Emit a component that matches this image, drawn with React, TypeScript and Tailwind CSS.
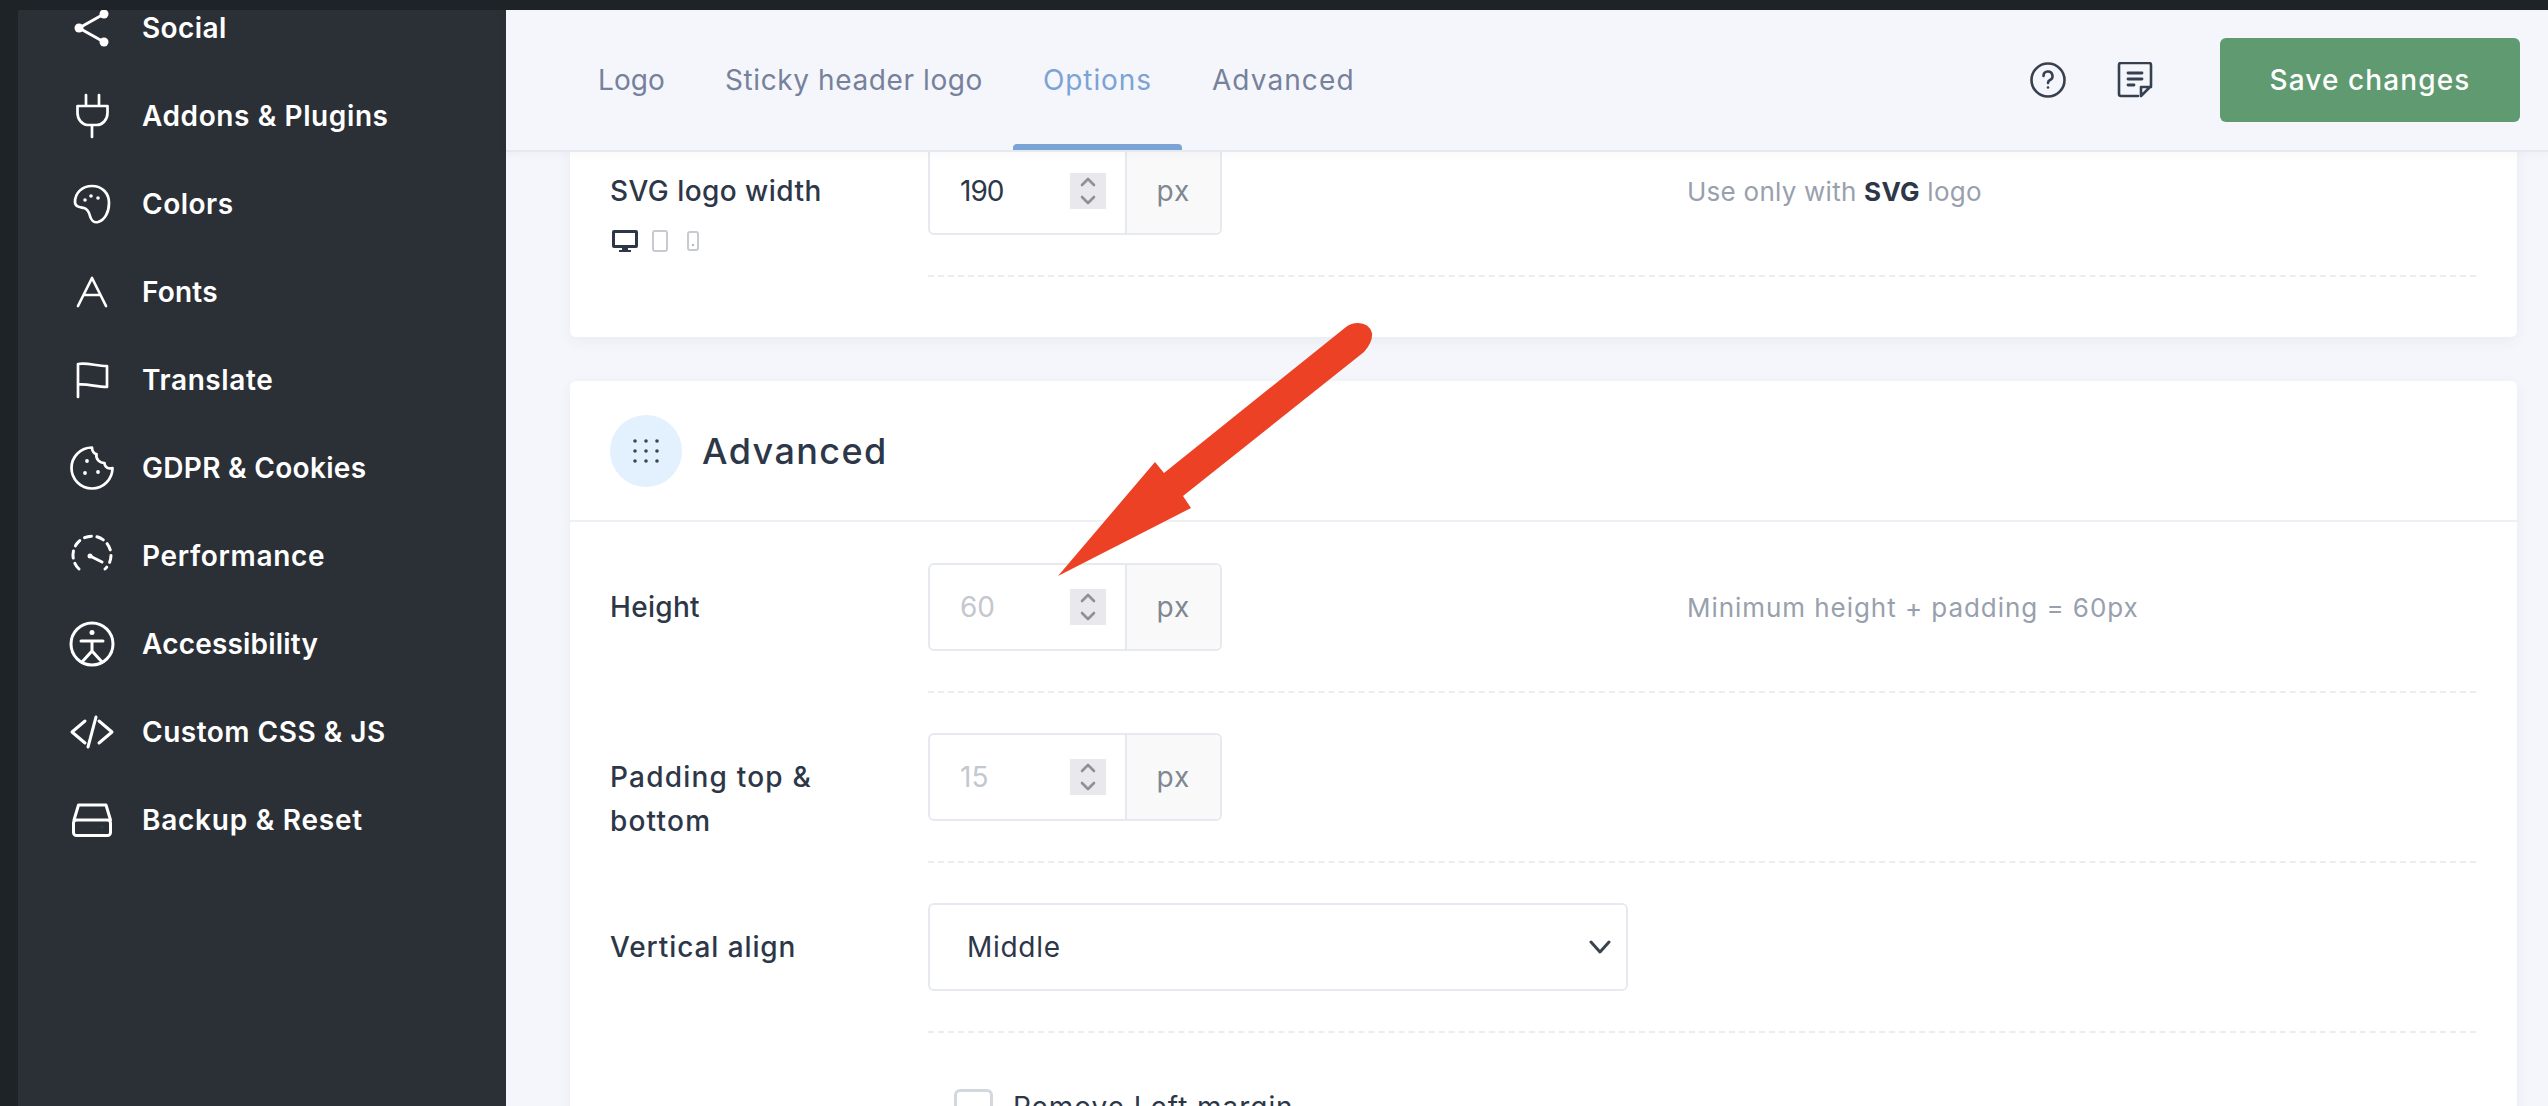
import { ReactNode } from "react";

const iconProps = {
  width: 48,
  height: 48,
  viewBox: "0 0 48 48",
  fill: "none",
  stroke: "#fff",
  strokeWidth: 2.7,
  strokeLinecap: "round" as const,
  strokeLinejoin: "round" as const,
};

const dot = (cx: number, cy: number, r = 2) => (
  <circle cx={cx} cy={cy} r={r} fill="#fff" stroke="none" />
);

const tabs = [
  { label: "Logo", spacing: "tracking-[0.1px] text-[#76819b]" },
  { label: "Sticky header logo", spacing: "tracking-[0.6px] text-[#76819b]" },
  { label: "Options", spacing: "tracking-[0.9px] text-[#7ba3d4]" },
  { label: "Advanced", spacing: "tracking-[1.1px] text-[#76819b]" },
];

const navItems: { label: string; icon: ReactNode; spacing: string }[] = [
  {
    label: "Social",
    spacing: "tracking-[0.4px]",
    icon: (
      <svg {...iconProps} strokeWidth={3}>
        <path d="M36 10 11 24l25 14" />
        {dot(36, 10, 4.5)}
        {dot(11, 24, 4.5)}
        {dot(36, 38, 4.5)}
      </svg>
    ),
  },
  {
    label: "Addons & Plugins",
    spacing: "tracking-[0.6px]",
    icon: (
      <svg {...iconProps}>
        <path d="M18 3v11M31 3v11M9.5 14h30v7a11 12 0 0 1-11 12h-9a11 12 0 0 1-10-12ZM24 33v12" />
      </svg>
    ),
  },
  {
    label: "Colors",
    spacing: "tracking-[0.5px]",
    icon: (
      <svg {...iconProps}>
        <path d="M24 6C14 6 7 13 7 22c0 5 5 5 9 6s5 4 6 8 4 7 8 6c7-2 11-10 11-19 0-10-7-17-17-17Z" />
        {dot(17, 20, 1.8)}
        {dot(23, 16, 1.8)}
        {dot(30, 18, 1.8)}
      </svg>
    ),
  },
  {
    label: "Fonts",
    spacing: "tracking-[0.2px]",
    icon: (
      <svg {...iconProps}>
        <path d="M10 38 24 10l14 28M15.5 27h17" />
      </svg>
    ),
  },
  {
    label: "Translate",
    spacing: "tracking-[0.6px]",
    icon: (
      <svg {...iconProps}>
        <path d="M10 41V8c10-1.5 18 2 29 2v21c-11 0-19-3.5-29-2.5" />
      </svg>
    ),
  },
  {
    label: "GDPR & Cookies",
    spacing: "tracking-[0.3px]",
    icon: (
      <svg {...iconProps}>
        <path d="M24 3.500A20.500 20.500 0 1 0 44.500 24c-4 1.500-8-1-8-5-5 0-9-4-8-9-2.500 0-4.500-3-4.500-6.500Z" />
        {dot(19, 17, 1.9)}
        {dot(17, 29, 1.9)}
        {dot(30, 28, 1.9)}
      </svg>
    ),
  },
  {
    label: "Performance",
    spacing: "tracking-[0.65px]",
    icon: (
      <svg {...iconProps} strokeWidth={3}>
        <path d="M11 37A19 19 0 1 1 37 37" strokeDasharray="7 5.500" />
        <path d="M22 24l12 6" />
        {dot(22, 24, 2.5)}
      </svg>
    ),
  },
  {
    label: "Accessibility",
    spacing: "tracking-[0.2px]",
    icon: (
      <svg {...iconProps} strokeWidth={3}>
        <circle cx="24" cy="24" r="21" />
        {dot(24, 12.500, 2.5)}
        <path d="M13 21h22M24 21v10M24 31l-10 11M24 31l10 11" />
      </svg>
    ),
  },
  {
    label: "Custom CSS & JS",
    spacing: "tracking-[0.5px]",
    icon: (
      <svg {...iconProps} strokeWidth={3}>
        <path d="M17 13 4 24l13 11M31 13l13 11-13 11M28 9l-8 30" />
      </svg>
    ),
  },
  {
    label: "Backup & Reset",
    spacing: "tracking-[0.75px]",
    icon: (
      <svg {...iconProps} strokeWidth={3}>
        <path d="M6 24 10.500 9H38l4.500 15" />
        <rect x="5.500" y="24" width="37" height="15.500" rx="3" />
        <circle cx="34" cy="31" r="1.800" fill="#2d3a4f" stroke="none" />
      </svg>
    ),
  },
];

function NumberField({ value, muted }: { value: string; muted?: boolean }) {
  return (
    <div className="flex h-[88px] w-[294px] rounded-md border-2 border-[#e6e9ef] bg-white">
      <div className="flex flex-1 items-center pl-[30px] pr-[19px]">
        <span
          className={
            muted
              ? "flex-1 text-[28px] text-[#c3c7ce]"
              : "flex-1 text-[28px] tracking-[-1px] text-[#2d3748]"
          }
        >
          {value}
        </span>
        <svg width="36" height="36" viewBox="0 0 36 36" fill="none" stroke="#8d8f99" strokeWidth="2.6" strokeLinecap="round" strokeLinejoin="round" className="bg-[#e8e8ed]">
          <path d="m12 12 6-6 6 6M12 24l6 6 6-6" />
        </svg>
      </div>
      <div className="flex w-[95px] items-center justify-center rounded-r-md border-l-2 border-[#e6e9ef] bg-[#f9f9fa] text-[28px] tracking-[1px] text-[#7f8792]">
        px
      </div>
    </div>
  );
}

function Hint({ children, spacing }: { children: ReactNode; spacing: string }) {
  return (
    <div className={`flex h-[88px] items-center text-[26px] text-[#98a0ad] ${spacing}`}>
      {children}
    </div>
  );
}

function Row({
  label,
  spacing,
  extra,
  children,
}: {
  label: ReactNode;
  spacing: string;
  extra?: ReactNode;
  children: ReactNode;
}) {
  return (
    <div className="flex">
      <div className={`w-[318px] pr-[40px] pt-[22px] text-[28px] font-medium leading-[44px] text-[#2d3748] ${spacing}`}>
        {label}
        {extra}
      </div>
      <div className="mb-[40px] flex-1 border-b-2 border-dashed border-[#eaedf2] pb-[40px]">
        <div className="grid grid-cols-[759px_1fr]">{children}</div>
      </div>
    </div>
  );
}

export default function App() {
  return (
    <div className="flex h-[1106px] w-[2548px] flex-col overflow-hidden bg-[#1e2328] font-['Inter',sans-serif]">
      <div className="relative z-20 h-[10px] shrink-0 bg-[#1e2328]" />
      <div className="flex min-h-0 flex-1">
        <div className="w-[18px] shrink-0 bg-[#1e2328]" />
        <aside className="w-[488px] shrink-0 bg-[#2b2f36]">
          <div className="-mt-[26px]">
            {navItems.map((item) => (
              <div key={item.label} className="flex h-[88px] items-center gap-[26px] pl-[50px]">
                {item.icon}
                <span className={`text-[28px] font-semibold text-white ${item.spacing}`}>
                  {item.label}
                </span>
              </div>
            ))}
          </div>
        </aside>

        <main className="flex min-w-0 flex-1 flex-col bg-[#f4f6fb]">
          <header className="relative z-10 flex h-[142px] shrink-0 items-stretch border-b-2 border-[#e5e9f2] bg-[#f4f6fb] pl-[62px] pr-[28px] shadow-[0_2px_8px_rgba(40,50,70,0.04)]">
            {tabs.map((tab) => (
              <div
                key={tab.label}
                className={`relative flex items-center px-[30px] text-[28px] ${tab.spacing}`}
              >
                {tab.label}
                {tab.label === "Options" && (
                  <div className="absolute inset-x-0 bottom-0 h-[6px] rounded-t bg-[#7ba3d4]" />
                )}
              </div>
            ))}
            <div className="ml-auto flex items-center">
              <svg width="36" height="36" viewBox="0 0 36 36" fill="none" stroke="#36404f" strokeWidth="2.6" strokeLinecap="round">
                <circle cx="18" cy="18" r="16.500" />
                <path d="M13.500 14a4.500 4.500 0 1 1 6.500 4c-1.300.7-2 1.400-2 3" />
                <circle cx="18" cy="25.500" r="1.300" fill="#36404f" stroke="none" />
              </svg>
              <svg width="36" height="36" viewBox="0 0 36 36" fill="none" stroke="#36404f" strokeWidth="2.6" strokeLinecap="round" strokeLinejoin="round" className="ml-[51px]">
                <path d="M21 34H4a2 2 0 0 1-2-2V3a2 2 0 0 1 2-2h28a2 2 0 0 1 2 2v21L24 34v-9h10" />
                <path d="M11 11h14M11 17h14M11 23h6" strokeWidth="2.8" />
              </svg>
              <button className="ml-[67px] h-[84px] w-[300px] rounded-md bg-[#5f9a70] text-[28px] font-medium tracking-[1.1px] text-white">
                Save changes
              </button>
            </div>
          </header>

          <div className="-mt-[9px] pl-[64px] pr-[31px]">
            <section className="rounded-md bg-white pb-[20px] pl-[40px] pr-[41px] pt-[4px] shadow-[0_4px_14px_rgba(50,60,90,0.06)]">
              <Row
                label="SVG logo width"
                spacing="tracking-[0.45px]"
                extra={
                  <div className="mt-[16px] flex items-center">
                    <svg width="30" height="24" viewBox="0 0 30 24" fill="#2d3748">
                      <path fillRule="evenodd" d="M4 1h22a2 2 0 0 1 2 2v14a2 2 0 0 1-2 2h-8v2h3v2H9v-2h3v-2H4a2 2 0 0 1-2-2V3a2 2 0 0 1 2-2Zm1 3v12h20V4Z" />
                    </svg>
                    <svg width="18" height="24" viewBox="0 0 18 24" fill="none" stroke="#c7cbd1" strokeWidth="2" className="ml-[11px]">
                      <rect x="2" y="2" width="14" height="20" rx="2" />
                    </svg>
                    <svg width="14" height="22" viewBox="0 0 14 22" fill="none" stroke="#c7cbd1" strokeWidth="2" className="ml-[17px]">
                      <rect x="2" y="2" width="10" height="18" rx="2" />
                      <circle cx="7" cy="15" r="1" fill="#9aa0a8" stroke="none" />
                    </svg>
                  </div>
                }
              >
                <NumberField value="190" />
                <Hint spacing="tracking-[0.25px]">
                  <span>
                    Use only with <b className="font-bold text-[#2d3748]">SVG</b> logo
                  </span>
                </Hint>
              </Row>
            </section>

            <section className="mt-[44px] rounded-md bg-white shadow-[0_4px_14px_rgba(50,60,90,0.06)]">
              <div className="flex h-[141px] items-center gap-[20px] border-b-2 border-[#edf0f4] pl-[40px]">
                <div className="flex h-[72px] w-[72px] items-center justify-center rounded-full bg-[#e3f0fe]">
                  <svg width="28" height="26" viewBox="0 0 28 26" fill="#3a4556">
                    {[3, 13, 23].map((y) =>
                      [3, 14, 25].map((x) => <circle key={`${x}-${y}`} cx={x} cy={y} r="1.800" />)
                    )}
                  </svg>
                </div>
                <h2 className="text-[36px] font-medium tracking-[1.4px] text-[#2d3748]">Advanced</h2>
              </div>

              <div className="pl-[40px] pr-[41px] pt-[41px]">
                <Row label="Height" spacing="tracking-[0.3px]">
                  <NumberField value="60" muted />
                  <Hint spacing="tracking-[0.95px]">Minimum height + padding = 60px</Hint>
                </Row>
                <Row label="Padding top & bottom" spacing="tracking-[1.2px]">
                  <NumberField value="15" muted />
                </Row>
                <Row label="Vertical align" spacing="tracking-[0.9px]">
                  <div className="flex h-[88px] w-[700px] items-center justify-between rounded-md border-2 border-[#e6e9ef] pl-[37px] pr-[14px] text-[28px] tracking-[0.7px] text-[#2d3748]">
                    Middle
                    <svg width="24" height="14" viewBox="0 0 24 14" fill="none" stroke="#3a4350" strokeWidth="3" strokeLinecap="round" strokeLinejoin="round">
                      <path d="m3 2 9 10 9-10" />
                    </svg>
                  </div>
                </Row>
                <div className="ml-[318px] flex items-center gap-[20px] pl-[26px] pt-[13px]">
                  <div className="h-[36px] w-[39px] rounded-md border-[3px] border-[#d3d8de] bg-white" />
                  <span className="text-[28px] tracking-[0.95px] text-[#2d3748]">Remove Left margin</span>
                </div>
              </div>
            </section>
          </div>
        </main>
      </div>

      {/* annotation arrow drawn on top of the screenshot */}
      <svg width="2548" height="1106" viewBox="0 0 2548 1106" className="pointer-events-none absolute left-0 top-0 z-30">
        <path
          d="M1346 327 1164 473 1155 462 1058 576 1191 508 1183 496 1364 352Q1373 342 1372 333 1369 323 1358 323 1351 323 1346 327Z"
          fill="#ec4125"
        />
      </svg>
    </div>
  );
}
